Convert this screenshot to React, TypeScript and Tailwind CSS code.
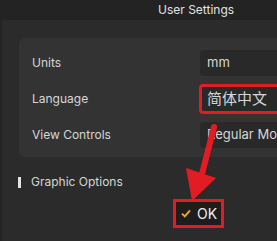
const rows = [
  { label: "Units", value: "mm" },
  { label: "Language", value: "简体中文", marked: true },
  { label: "View Controls", value: "Regular Mouse" },
]

export default function App() {
  return (
    <div
      className="relative h-[241px] w-[277px] overflow-hidden bg-[#2b2b2b] text-[12px] text-[#d6d6d6]"
      style={{ fontFamily: "Inter, 'Noto Sans CJK SC', sans-serif" }}
    >
      <div className="flex h-[20px] items-center bg-[#232323] pl-[158px] text-[#e2e2e2]">User Settings</div>

      <div className="flex h-[221px] flex-col border-l-2 border-[#242424]">
        <div className="ml-[17px] mt-[18px] flex h-[119px] w-[300px] flex-col gap-[10px] rounded-l-md bg-[#333333] pt-[12px] pl-[13px]">
          {rows.map((row) => (
            <div key={row.label} className="flex h-[26px] items-center">
              <span className="w-[168px]">{row.label}</span>
              <div
                className={
                  row.marked
                    ? "relative flex h-full flex-1 items-center rounded-l bg-[#292929] pl-[7px] text-[15px] whitespace-nowrap"
                    : "relative flex h-full flex-1 items-center rounded-l bg-[#292929] pl-[7px] text-[13px] whitespace-nowrap"
                }
              >
                {row.value}
                {row.marked && (
                  <div className="absolute -bottom-[2px] -left-[1px] -right-[1px] -top-[2px] rounded-sm border-[3px] border-[#e31b23]" />
                )}
              </div>
            </div>
          ))}
        </div>

        <div className="mt-[16px] flex items-center gap-[10px] pl-[16px]">
          <div className="h-[11px] w-[3px] bg-[#e4e4e4]" />
          <span>Graphic Options</span>
        </div>

        <div className="mt-[8px] flex pl-[171px]">
          <div className="flex h-[29px] w-[51px] items-center gap-[6px] border-[3px] border-[#e31b23] bg-[#1d1d1d] pl-[5px] text-[14px] text-[#eeeeee]">
            <svg width="10" height="9" viewBox="0 0 10 9">
              <path d="M1 4.6 L3.8 7.4 L9 1.4" fill="none" stroke="#f3a81c" strokeWidth="2" />
            </svg>
            <span>OK</span>
          </div>
        </div>
      </div>

      <svg className="absolute left-0 top-0" width="277" height="241" viewBox="0 0 277 241">
        <line x1="214" y1="127" x2="202" y2="174" stroke="#e31b23" strokeWidth="6" strokeLinecap="round" />
        <polygon points="186,168 216,178 192,201" fill="#e31b23" />
      </svg>
    </div>
  )
}
